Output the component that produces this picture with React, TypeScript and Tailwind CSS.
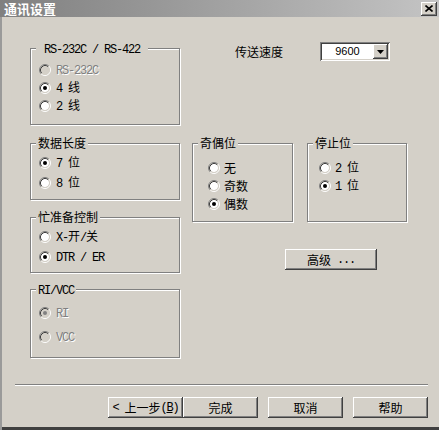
import type { ReactNode } from 'react';
import clsx from 'clsx';

const ASCII = /^[\x20-\x7e]+$/;

// SimSun-like mix: half-width latin, full-width CJK
function T({ s }: { s: string }) {
  const parts = s.split(/([\x20-\x7e]+)/).filter(Boolean);
  return (
    <>
      {parts.map((p, i) =>
        ASCII.test(p) ? (
          <span key={i} className="[font-family:'Liberation_Mono',monospace] text-[12px] tracking-[-1.2px] whitespace-pre">
            {p}
          </span>
        ) : (
          <span key={i} className="text-[12px]">
            {p}
          </span>
        )
      )}
    </>
  );
}

function Radio({ checked, disabled }: { checked?: boolean; disabled?: boolean }) {
  return (
    <svg width="12" height="12" viewBox="0 0 12 12" className="shrink-0">
      <circle cx="6" cy="6" r="4" fill={disabled ? '#d4d0c8' : '#fff'} />
      <path d="M2.11 9.89A5.5 5.5 0 0 1 9.89 2.11" fill="none" stroke="#808080" />
      <path d="M9.89 2.11A5.5 5.5 0 0 1 2.11 9.89" fill="none" stroke="#fff" />
      <path d="M2.82 9.18A4.5 4.5 0 0 1 9.18 2.82" fill="none" stroke="#404040" />
      <path d="M9.18 2.82A4.5 4.5 0 0 1 2.82 9.18" fill="none" stroke="#d4d0c8" />
      {checked && <circle cx="6" cy="6" r="2" fill={disabled ? '#808080' : '#000'} />}
    </svg>
  );
}

function Option({ label, checked, disabled, gap }: { label: string; checked?: boolean; disabled?: boolean; gap: string }) {
  return (
    <div className={clsx('flex items-center h-[18px]', gap)}>
      <Radio checked={checked} disabled={disabled} />
      <span className={clsx('leading-[18px]', disabled ? 'text-[#808080] [text-shadow:1px_1px_0_#fff]' : 'text-black')}>
        <T s={label} />
      </span>
    </div>
  );
}

function Group({ label, className, children }: { label: string; className?: string; children: ReactNode }) {
  return (
    <div className={clsx('relative flex flex-col border border-[#808080] shadow-[inset_1px_1px_0_#fff,1px_1px_0_#fff]', className)}>
      <span className="absolute -top-[9px] left-[5px] px-[2px] bg-[#d4d0c8] leading-[16px] whitespace-pre">
        <T s={label} />
      </span>
      {children}
    </div>
  );
}

const raised = 'bg-[#d4d0c8] shadow-[inset_-1px_-1px_0_#404040,inset_1px_1px_0_#fff,inset_-2px_-2px_0_#808080]';

function Button({ children, className }: { children: ReactNode; className?: string }) {
  return (
    <button className={clsx('h-[21px] flex items-center justify-center text-black leading-none', raised, className)}>
      {children}
    </button>
  );
}

export default function App() {
  return (
    <div className="w-[439px] h-[430px] flex flex-col bg-[#d4d0c8] [font-family:'Noto_Sans_CJK_SC',sans-serif] text-[12px] text-black shadow-[inset_2px_0_0_#9a9a9a,inset_0_-3px_0_#404040] overflow-hidden">
      {/* title bar */}
      <div className="h-[17px] flex items-center bg-linear-to-r from-[#808080] to-[#c4c4c4] pl-[4px] pr-[2px]">
        <span className="text-white font-bold text-[13px] leading-[17px]">通讯设置</span>
        <div className={clsx('ml-auto w-[16px] h-[14px] flex items-center justify-center', raised)}>
          <svg width="8" height="7" viewBox="0 0 8 7">
            <path d="M0.5 0.5L7.5 6.5M7.5 0.5L0.5 6.5" stroke="#000" strokeWidth="1.6" />
          </svg>
        </div>
      </div>

      <div className="flex pt-[25px] pl-[30px]">
        {/* left column */}
        <div className="flex flex-col w-[150px] pt-[6px]">
          <Group label=" RS-232C / RS-422 " className="h-[77px] pt-[12px] pl-[8px]">
            <Option label="RS-232C" disabled gap="gap-[5px]" />
            <Option label="4 线" checked gap="gap-[5px]" />
            <Option label="2 线" gap="gap-[5px]" />
          </Group>
          <Group label="数据长度" className="mt-[18px] h-[57px] pt-[10px] pl-[8px] gap-[2px]">
            <Option label="7 位" checked gap="gap-[5px]" />
            <Option label="8 位" gap="gap-[5px]" />
          </Group>
          <Group label="忙准备控制" className="mt-[17px] h-[56px] pt-[10px] pl-[8px] gap-[2px]">
            <Option label="X-开/关" gap="gap-[5px]" />
            <Option label="DTR / ER" checked gap="gap-[5px]" />
          </Group>
          <Group label="RI/VCC" className="mt-[16px] h-[69px] pt-[14px] pl-[8px] gap-[6px]">
            <Option label="RI" checked disabled gap="gap-[5px]" />
            <Option label="VCC" disabled gap="gap-[5px]" />
          </Group>
        </div>

        {/* right column */}
        <div className="flex flex-col ml-[12px]">
          <div className="flex items-center h-[19px]">
            <span className="ml-[43px] w-[85px] text-[12px]">传送速度</span>
            <div className="w-[70px] h-[19px] flex bg-white shadow-[inset_1px_1px_0_#808080,inset_-1px_-1px_0_#fff,inset_2px_2px_0_#404040,inset_-2px_-2px_0_#d4d0c8] p-[2px]">
              <span className="flex-1 flex items-center justify-center [font-family:'Liberation_Sans',sans-serif] text-[11px] leading-none">9600</span>
              <div className={clsx('w-[15px] h-full flex items-center justify-center', raised)}>
                <svg width="7" height="4" viewBox="0 0 7 4">
                  <path d="M0 0H7L3.5 4Z" fill="#000" />
                </svg>
              </div>
            </div>
          </div>

          <div className="flex mt-[82px] gap-[14px]">
            <Group label="奇偶位" className="w-[101px] h-[79px] pt-[15px] pl-[15px]">
              <Option label="无" gap="gap-[4px]" />
              <Option label="奇数" gap="gap-[4px]" />
              <Option label="偶数" checked gap="gap-[4px]" />
            </Group>
            <Group label="停止位" className="w-[100px] h-[79px] pt-[15px] pl-[11px]">
              <Option label="2 位" gap="gap-[4px]" />
              <Option label="1 位" checked gap="gap-[4px]" />
            </Group>
          </div>

          <Button className="mt-[27px] ml-[93px] w-[92px] h-[20px]">
            <T s="高级 ..." />
          </Button>
        </div>
      </div>

      {/* separator */}
      <div className="mt-[26px] ml-[15px] w-[413px] h-[2px] border-t border-[#808080] border-b border-b-white" />

      {/* bottom buttons */}
      <div className="flex mt-[11px] pl-[108px]">
        <Button className="w-[75px]">
          <T s="< " />
          <span className="text-[12px]">上一步</span>
          <span className="[font-family:'Liberation_Mono',monospace] text-[12px] tracking-[-1.2px]">
            (<span className="underline">B</span>)
          </span>
        </Button>
        <Button className="w-[75px]">完成</Button>
        <Button className="w-[75px] ml-[10px]">取消</Button>
        <Button className="w-[75px] ml-[10px]">帮助</Button>
      </div>
    </div>
  );
}
